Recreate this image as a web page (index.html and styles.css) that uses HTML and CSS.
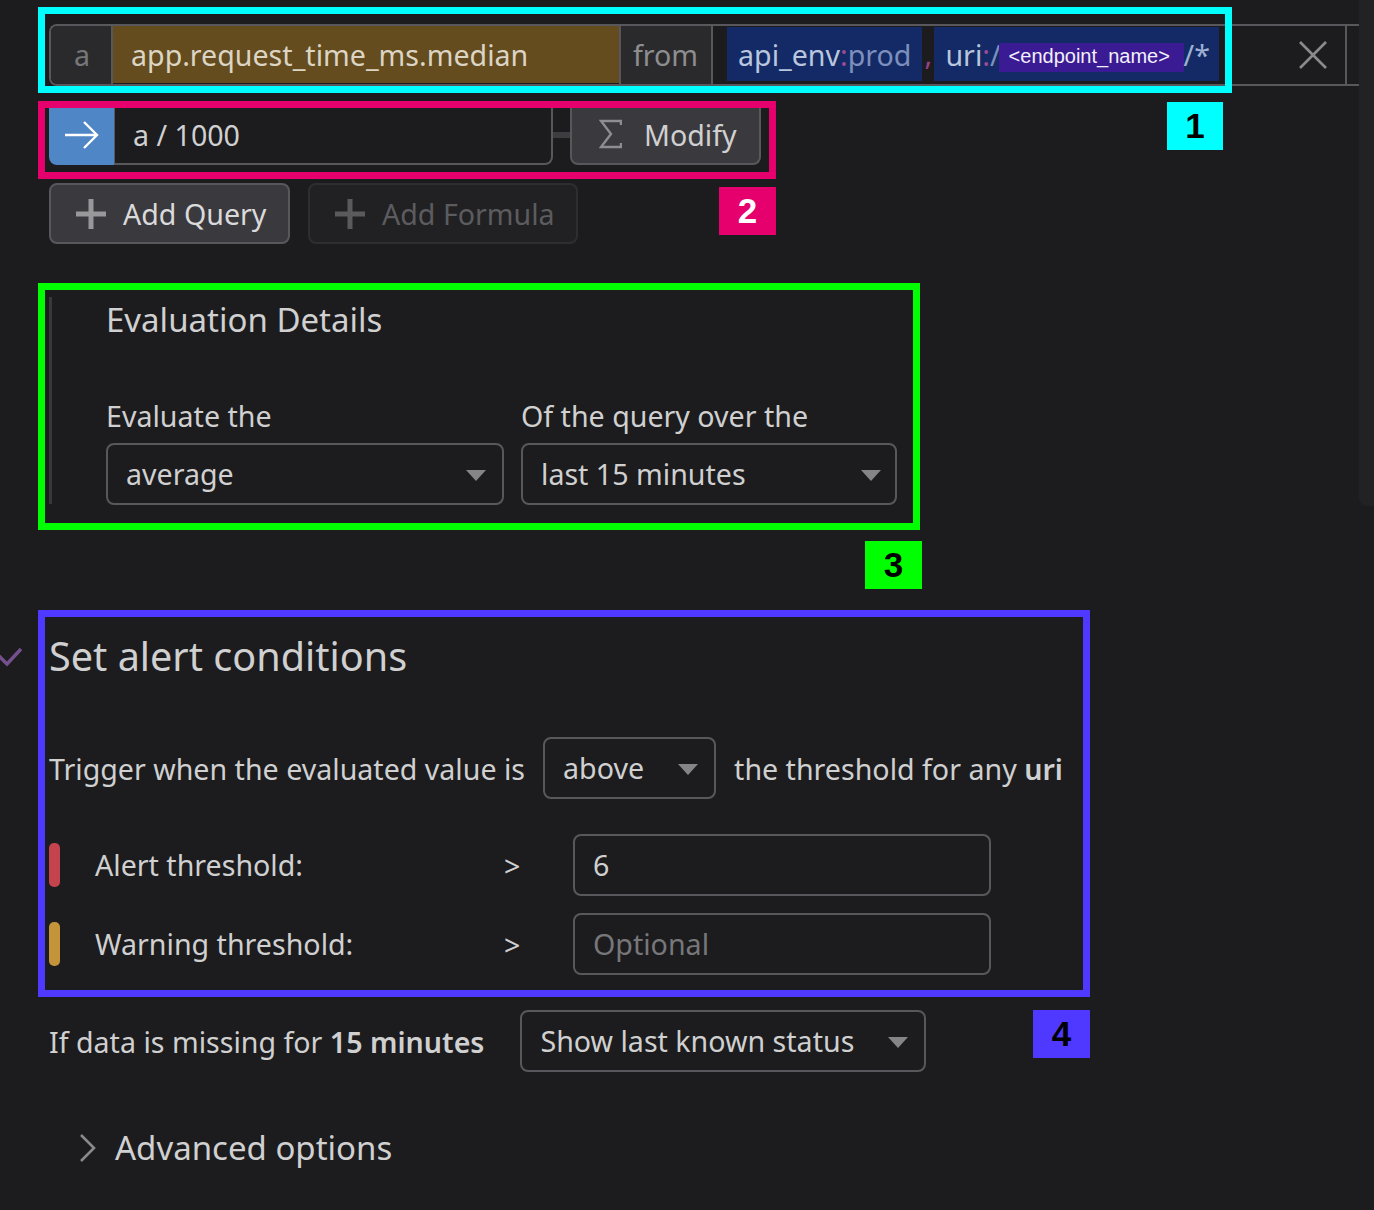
FILE: index.html
```html
<!DOCTYPE html>
<html lang="en">

<head>
	<meta charset="UTF-8">
	<title>Alert query</title>
	<link rel="stylesheet" href="styles.css">
</head>

<body>
	<div class="side-panel"></div>

	<div class="query-row">
		<div class="q-name">a</div>
		<div class="q-metric">app.request_time_ms.median</div>
		<div class="q-from">from</div>
		<div class="q-tags">
			<span class="tag">api_env<i>:</i><em>prod</em></span>
			<span class="comma">,</span>
			<span class="tag tag-uri">uri<i>:</i><em>/</em><span class="endpoint">&lt;endpoint_name&gt;</span><em>/*</em></span>
		</div>
		<div class="q-close">
			<svg width="28" height="28" viewBox="0 0 28 28"><path d="M1 1 L27 27 M27 1 L1 27" stroke="#8a8a8c" stroke-width="2.6" fill="none"/></svg>
		</div>
		<div class="q-end"></div>
	</div>

	<div class="formula-row">
		<div class="arrow-box">
			<svg width="34" height="28" viewBox="0 0 34 28"><path d="M0 14 H32 M19 1 L32 14 L19 27" stroke="#fff" stroke-width="2.4" fill="none"/></svg>
		</div>
		<div class="formula-input">a / 1000</div>
		<div class="connector"></div>
		<div class="btn btn-modify">
			<svg width="23" height="30" viewBox="0 0 23 30"><path d="M22 6 V2 H2 L12 15 L2 28 H22 V24" stroke="#8e8e90" stroke-width="2.4" fill="none"/></svg>
			Modify
		</div>
	</div>

	<div class="add-row">
		<div class="btn btn-add">
			<svg width="30" height="30" viewBox="0 0 30 30"><path d="M15 0 V30 M0 15 H30" stroke="#98989a" stroke-width="5" fill="none"/></svg>
			Add Query
		</div>
		<div class="btn btn-add btn-disabled">
			<svg width="30" height="30" viewBox="0 0 30 30"><path d="M15 0 V30 M0 15 H30" stroke="#5a5a5c" stroke-width="5" fill="none"/></svg>
			Add Formula
		</div>
	</div>

	<div class="eval">
		<h3>Evaluation Details</h3>
		<div class="eval-fields">
			<div class="field">
				<label>Evaluate the</label>
				<div class="select sel-avg">average</div>
			</div>
			<div class="field">
				<label>Of the query over the</label>
				<div class="select sel-time">last 15 minutes</div>
			</div>
		</div>
	</div>

	<h2 class="section-title">Set alert conditions</h2>

	<div class="trigger-row">
		<span>Trigger when the evaluated value is</span>
		<div class="select sel-above">above</div>
		<span>the threshold for any <b>uri</b></span>
	</div>

	<div class="threshold">
		<div class="mark mark-red"></div>
		<div class="th-label">Alert threshold:</div>
		<div class="th-op">&gt;</div>
		<div class="th-input">6</div>
	</div>
	<div class="threshold threshold-warn">
		<div class="mark mark-yellow"></div>
		<div class="th-label">Warning threshold:</div>
		<div class="th-op">&gt;</div>
		<div class="th-input th-empty">Optional</div>
	</div>

	<div class="missing-row">
		<span>If data is missing for <b>15 minutes</b></span>
		<div class="select sel-missing">Show last known status</div>
	</div>

	<div class="advanced">
		<svg width="18" height="28" viewBox="0 0 18 28"><path d="M2 1 L15 14 L2 27" stroke="#8a8a8c" stroke-width="2.6" fill="none"/></svg>
		Advanced options
	</div>

	<!-- annotations drawn on top of the screenshot -->
	<svg class="check" width="24" height="20" viewBox="0 0 24 20"><path d="M-1 9 L7 17 L21 2" stroke="#74508f" stroke-width="3.4" fill="none"/></svg>
	<div class="frame frame-1"></div>
	<div class="frame frame-2"></div>
	<div class="frame frame-3"></div>
	<div class="frame frame-4"></div>
	<div class="badge badge-1">1</div>
	<div class="badge badge-2">2</div>
	<div class="badge badge-3">3</div>
	<div class="badge badge-4">4</div>
</body>

</html>
```

FILE: styles.css
```css
* {
	box-sizing: border-box;
}

body {
	margin: 0;
	height: 1210px;
	overflow: hidden;
	position: relative;
	padding: 24px 0 0 49px;
	background-color: #1c1c1e;
	color: #d0d0d1;
	font-family: "Noto Sans", sans-serif;
	font-size: 28.6px;
}

b {
	font-weight: 600;
}

.side-panel {
	position: absolute;
	top: -10px;
	right: 0;
	width: 15px;
	height: 516px;
	background-color: #222225;
	border-radius: 0 0 0 8px;
}

/* query row */
.query-row {
	display: flex;
	width: 1310px;
	height: 62px;
	border: 2px solid #58585c;
	border-right: none;
	border-radius: 8px 0 0 8px;
}

.q-name {
	flex: 0 0 62px;
	background-color: #2a2a2c;
	color: #77777a;
	border-right: 2px solid #58585c;
	border-radius: 6px 0 0 6px;
	padding-left: 23px;
	line-height: 58px;
}

.q-metric {
	flex: 0 0 506px;
	background-color: #644c1f;
	color: #dcd5c4;
	padding-left: 18px;
	line-height: 58px;
	height: 57px;
}

.q-from {
	flex: 0 0 94px;
	background-color: #2a2a2c;
	color: #8e8e90;
	border-left: 2px solid #58585c;
	border-right: 2px solid #58585c;
	padding-left: 12px;
	line-height: 58px;
}

.q-tags {
	display: flex;
	flex: 0 0 523px;
	padding: 1px 0 0 14px;
}

.tag {
	display: flex;
	align-items: center;
	height: 54px;
	padding: 0 11px;
	background-color: #132a66;
	color: #b9c6de;
}

.tag i {
	color: #a04a96;
	font-style: normal;
}

.tag em {
	color: #7c90bb;
	font-style: normal;
}

.comma {
	width: 12px;
	color: #93408c;
	line-height: 54px;
	text-align: center;
}

.tag-uri {
	flex: 0 0 285px;
	padding: 0 0 0 11px;
}

.tag-uri em:last-child {
	color: #9fb0d3;
}

.endpoint {
	flex: 0 0 185px;
	height: 29px;
	margin: 7px 0 0 -2px;
	padding-left: 10px;
	background-color: #3a1b93;
	color: #f2f0fa;
	font-family: "Liberation Sans", sans-serif;
	font-size: 20px;
	line-height: 26px;
}

.q-close {
	flex: 0 0 111px;
	display: flex;
	align-items: center;
	justify-content: flex-end;
	padding-right: 18px;
	border-right: 2px solid #58585c;
}

.q-end {
	flex: 1;
}

/* formula row */
.formula-row {
	display: flex;
	align-items: center;
	margin-top: 19px;
	height: 60px;
}

.arrow-box {
	width: 65px;
	height: 60px;
	display: flex;
	align-items: center;
	justify-content: center;
	background-color: #4f86c6;
	border-radius: 0 0 0 8px;
}

.formula-input {
	width: 439px;
	height: 60px;
	padding-left: 18px;
	line-height: 60px;
	border: 2px solid #58585c;
	border-top: none;
	border-left-width: 1px;
	border-radius: 0 0 8px 0;
}

.connector {
	width: 17px;
	height: 6px;
	background-color: #3d3d41;
}

.btn {
	display: flex;
	align-items: center;
	height: 61px;
	border: 2px solid #58585c;
	border-radius: 8px;
	background-color: #3a393e;
}

.btn-modify {
	width: 191px;
	height: 60px;
	border-top: none;
	border-radius: 0 0 8px 8px;
	padding-left: 27px;
	gap: 22px;
}

.add-row {
	display: flex;
	gap: 18px;
	margin-top: 18px;
}

.btn-add {
	width: 241px;
	padding-left: 25px;
	gap: 17px;
	color: #dadadb;
}

.btn-disabled {
	width: 270px;
	background-color: #212123;
	border-color: #2e2e30;
	color: #5c5c5f;
}

/* evaluation details */
.eval {
	margin-top: 53px;
	padding-left: 54px;
	width: 850px;
	height: 207px;
	border-left: 3px solid #38383b;
}

.eval h3 {
	margin: 0;
	font-size: 33px;
	font-weight: 400;
	line-height: 46px;
}

.eval-fields {
	display: flex;
	gap: 17px;
	margin-top: 53px;
}

.field label {
	display: block;
	line-height: 40px;
	margin-bottom: 7px;
}

.select {
	position: relative;
	height: 62px;
	padding-left: 18px;
	line-height: 58px;
	border: 2px solid #58585c;
	border-radius: 8px;
}

.select::after {
	content: "";
	position: absolute;
	right: 16px;
	top: 25px;
	border-left: 10px solid transparent;
	border-right: 10px solid transparent;
	border-top: 11px solid #858587;
}

.sel-avg {
	width: 398px;
}

.sel-time {
	width: 376px;
}

.sel-time::after {
	right: 14px;
}

/* alert conditions */
.section-title {
	margin: 122px 0 0;
	font-size: 39.6px;
	font-weight: 400;
	line-height: 60px;
}

.trigger-row {
	display: flex;
	align-items: center;
	gap: 18px;
	margin-top: 51px;
}

.sel-above {
	width: 173px;
}

.threshold {
	display: flex;
	align-items: center;
	height: 62px;
	margin-top: 35px;
}

.threshold-warn {
	margin-top: 17px;
}

.mark {
	width: 11px;
	height: 44px;
	border-radius: 5px;
}

.mark-red {
	background-color: #c5434c;
}

.mark-yellow {
	background-color: #c4943a;
}

.th-label {
	width: 409px;
	margin-left: 35px;
	padding-bottom: 2px;
}

.th-op {
	width: 69px;
}

.th-input {
	width: 418px;
	height: 62px;
	padding-left: 18px;
	line-height: 58px;
	border: 2px solid #58585c;
	border-radius: 8px;
}

.th-empty {
	color: #77777a;
}

.missing-row {
	display: flex;
	align-items: center;
	gap: 36px;
	margin-top: 35px;
}

.sel-missing {
	width: 406px;
}

.advanced {
	display: flex;
	align-items: center;
	gap: 18px;
	margin: 52px 0 0 30px;
	font-size: 33px;
	line-height: 48px;
}

/* annotations */
.frame {
	position: absolute;
	border: 7px solid;
}

.frame-1 {
	left: 38px;
	top: 7px;
	width: 1194px;
	height: 86px;
	border-color: #00ffff;
}

.frame-2 {
	left: 38px;
	top: 101px;
	width: 738px;
	height: 78px;
	border-color: #e6006e;
}

.frame-3 {
	left: 38px;
	top: 283px;
	width: 882px;
	height: 247px;
	border-color: #00ff00;
}

.frame-4 {
	left: 38px;
	top: 610px;
	width: 1052px;
	height: 387px;
	border-color: #4f38ff;
}

.badge {
	position: absolute;
	width: 57px;
	height: 48px;
	color: #000;
	font-family: "Liberation Sans", sans-serif;
	font-size: 35px;
	font-weight: 700;
	line-height: 48px;
	text-align: center;
}

.badge-1 {
	left: 1167px;
	top: 102px;
	width: 56px;
	background-color: #00ffff;
}

.badge-2 {
	left: 719px;
	top: 187px;
	background-color: #e6006e;
	color: #fff;
}

.badge-3 {
	left: 865px;
	top: 541px;
	background-color: #00ff00;
}

.badge-4 {
	left: 1033px;
	top: 1010px;
	background-color: #4f38ff;
}

.check {
	position: absolute;
	left: 0;
	top: 647px;
}
```
